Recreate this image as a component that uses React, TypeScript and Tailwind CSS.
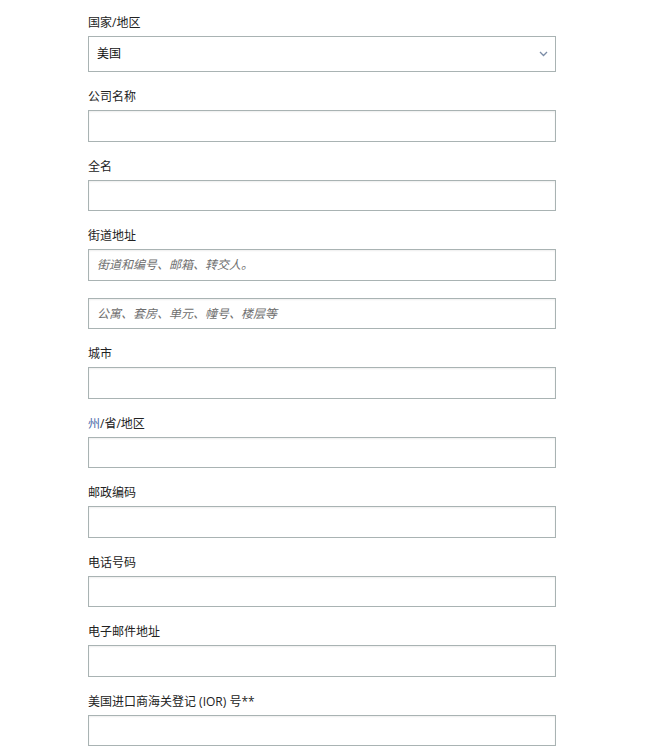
import React from "react";

const font = { fontFamily: '"Open Sans", "Noto Sans CJK SC", sans-serif' };

const inputCls =
  "block w-full h-[31.5px] border border-[#a9b3b3] bg-white px-[8px] text-[12px] text-[#222] placeholder:text-[#6f6f6f] placeholder:italic shadow-[inset_0_1px_2px_rgba(0,0,0,0.07)] outline-none";

const Field = ({ label, children }: { label: React.ReactNode; children: React.ReactNode }) => (
  <div className="mb-[15px]">
    <label className="block text-[12px] leading-[18px] text-[#222] mb-[5px] translate-y-[1px]">{label}</label>
    {children}
  </div>
);

export default function App() {
  return (
    <div className="min-h-screen bg-white" style={font}>
      <div className="ml-[88px] w-[468px] pt-[13px]">
        <Field label="国家/地区">
          <div className="relative flex items-center h-[36px] border border-[#a9b3b3] bg-white px-[8px]">
            <span className="text-[12px] text-[#111]">美国</span>
            <svg
              className="absolute right-[7px] top-1/2 -translate-y-1/2"
              width="9"
              height="6"
              viewBox="0 0 9 6"
              fill="none"
            >
              <path d="M1 1l3.5 3.5L8 1" stroke="#7b8ca6" strokeWidth="1.3" />
            </svg>
          </div>
        </Field>

        <Field label="公司名称">
          <input className={inputCls} />
        </Field>

        <Field label="全名">
          <input className={inputCls} />
        </Field>

        <Field label="街道地址">
          <input className={inputCls} placeholder="街道和编号、邮箱、转交人。" />
          <input className={inputCls + " mt-[17px]"} placeholder="公寓、套房、单元、幢号、楼层等" />
        </Field>

        <Field label="城市">
          <input className={inputCls} />
        </Field>

        <Field
          label={
            <>
              <span className="text-[#4a6aa8]">州</span>/省/地区
            </>
          }
        >
          <input className={inputCls} />
        </Field>

        <Field label="邮政编码">
          <input className={inputCls} />
        </Field>

        <Field label="电话号码">
          <input className={inputCls} />
        </Field>

        <Field label="电子邮件地址">
          <input className={inputCls} />
        </Field>

        <Field label="美国进口商海关登记 (IOR) 号**">
          <input className={inputCls} />
        </Field>
      </div>
    </div>
  );
}
